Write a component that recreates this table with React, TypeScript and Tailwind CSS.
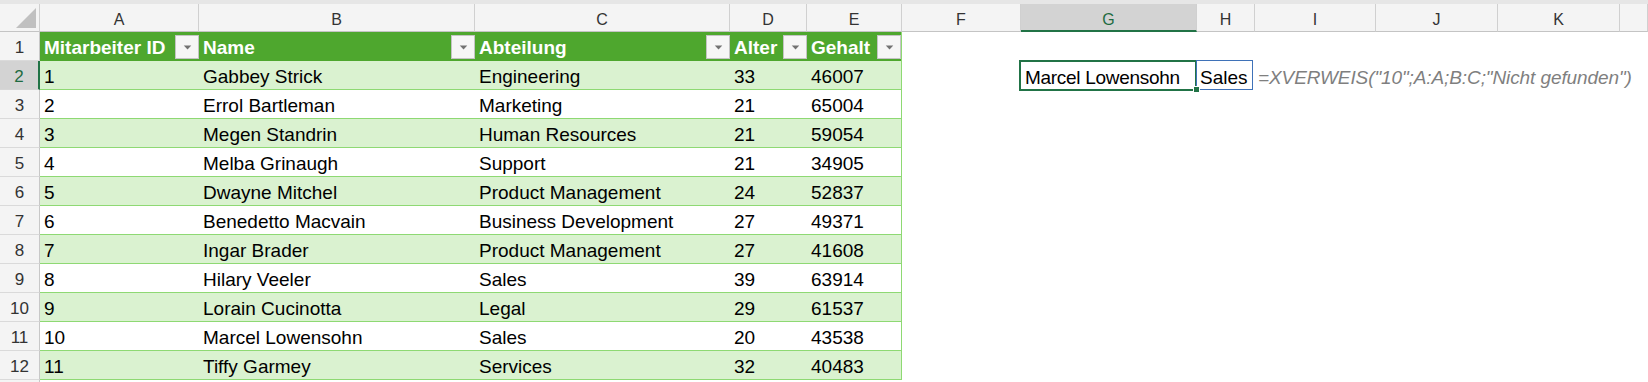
import React from "react";

// employee table rows: id, name, department, age, salary
const rows: [string, string, string, string, string][] = [
  ["1", "Gabbey Strick", "Engineering", "33", "46007"],
  ["2", "Errol Bartleman", "Marketing", "21", "65004"],
  ["3", "Megen Standrin", "Human Resources", "21", "59054"],
  ["4", "Melba Grinaugh", "Support", "21", "34905"],
  ["5", "Dwayne Mitchel", "Product Management", "24", "52837"],
  ["6", "Benedetto Macvain", "Business Development", "27", "49371"],
  ["7", "Ingar Brader", "Product Management", "27", "41608"],
  ["8", "Hilary Veeler", "Sales", "39", "63914"],
  ["9", "Lorain Cucinotta", "Legal", "29", "61537"],
  ["10", "Marcel Lowensohn", "Sales", "20", "43538"],
  ["11", "Tiffy Garmey", "Services", "32", "40483"],
];

const letters = ["A", "B", "C", "D", "E", "F", "G", "H", "I", "J", "K", ""];
const headers = ["Mitarbeiter ID", "Name", "Abteilung", "Alter", "Gehalt"];

const GRID =
  "grid grid-cols-[40px_159px_276px_255px_77px_95px_119px_176px_58px_121px_122px_122px_1fr]";

function FilterButton() {
  return (
    <span className="mb-[2px] flex h-6 w-6 shrink-0 items-center justify-center border border-[#c4c4c4] bg-[#f6f6f6]">
      <svg viewBox="0 0 10 6" className="h-[5px] w-[9px]">
        <path d="M0.5 0.5h9L5 5.5z" fill="#727272" />
      </svg>
    </span>
  );
}

function RowNum({ n, selected }: { n?: number; selected?: boolean }) {
  return (
    <div
      className={
        selected
          ? "flex items-end justify-center border-b border-r-2 border-b-[#d6d6d6] border-r-[#217346] bg-[#d3d3d3] text-[17px] leading-[24px] text-[#1e6b41]"
          : "flex items-end justify-center border-b border-r border-b-[#dadada] border-r-[#c8c8c8] bg-[#f4f4f4] text-[17px] leading-[24px] text-[#333]"
      }
    >
      {n}
    </div>
  );
}

function Empty({ n }: { n: number }) {
  return (
    <>
      {Array.from({ length: n }).map((_, i) => (
        <div key={i} />
      ))}
    </>
  );
}

export default function App() {
  return (
    <div className="h-[382px] w-[1648px] overflow-hidden bg-white font-['Liberation_Sans',Arial,sans-serif] text-black">
      <div className="h-[4px] bg-[#e6e6e6]" />

      {/* column letters */}
      <div className={`${GRID} h-[28px]`}>
        <div className="flex items-end justify-end border-b border-r border-b-[#c4c4c4] border-r-[#d0d0d0] bg-[#f4f4f4] pb-[3px] pr-[3px]">
          <svg viewBox="0 0 20 20" className="h-5 w-5">
            <path d="M20 0V20H0z" fill="#c0c0c0" />
          </svg>
        </div>
        {letters.map((l) =>
          l === "G" ? (
            <div
              key={l}
              className="flex items-end justify-center border-b-2 border-r border-b-[#217346] border-r-[#d0d0d0] bg-[#d3d3d3] text-[16px] leading-[20px] text-[#1e6b41]"
            >
              {l}
            </div>
          ) : (
            <div
              key={l || "L"}
              className="flex items-end justify-center border-b border-r border-b-[#c4c4c4] border-r-[#d0d0d0] bg-[#f4f4f4] pb-[1px] text-[16px] leading-[20px] text-[#333]"
            >
              {l}
            </div>
          )
        )}
      </div>

      {/* table header row */}
      <div className={`${GRID} h-[29px]`}>
        <RowNum n={1} />
        {headers.map((h, i) => (
          <div
            key={h}
            className={`flex items-end justify-between bg-[#4ea72e] pl-1 text-[19px] font-bold text-white ${i === 4 ? "border-r border-r-[#8ed973]" : ""}`}
          >
            <span className="mb-[1px] whitespace-nowrap leading-[24px]">{h}</span>
            <FilterButton />
          </div>
        ))}
        <Empty n={7} />
      </div>

      {rows.map((r, idx) => {
        const rowNo = idx + 2;
        const bg = idx % 2 === 0 ? "bg-[#daf2d0]" : "bg-white";
        return (
          <div key={r[0]} className={`${GRID} h-[29px]`}>
            <RowNum n={rowNo} selected={rowNo === 2} />
            {r.map((v, ci) => (
              <div
                key={ci}
                className={`flex items-end whitespace-nowrap border-b border-b-[#8ed973] ${bg} pl-1 text-[19px] leading-[24px] ${ci === 4 ? "border-r border-r-[#8ed973]" : ""}`}
              >
                {v}
              </div>
            ))}
            {rowNo === 2 ? (
              <>
                <div />
                <div className="relative flex items-end whitespace-nowrap pl-1 text-[19px] leading-[24px] tracking-[-0.3px]">
                  Marcel Lowensohn
                  <div className="absolute -bottom-[1px] -left-[2px] -top-[1px] right-0 border-2 border-[#217346]" />
                  <div className="absolute -bottom-[3px] -right-[3px] z-10 h-[7px] w-[7px] border border-white bg-[#217346]" />
                </div>
                <div className="relative flex items-end whitespace-nowrap pl-[3px] text-[19px] leading-[24px]">
                  Sales
                  <div className="absolute -left-[1px] -top-[1px] bottom-0 right-[2px] border border-[#3f72b8]" />
                </div>
                <div className="flex items-end overflow-visible whitespace-nowrap pl-[3px] text-[19px] italic leading-[24px] tracking-[-0.1px] text-[#7f7f7f]">
                  =XVERWEIS("10";A:A;B:C;"Nicht gefunden")
                </div>
                <Empty n={3} />
              </>
            ) : (
              <Empty n={7} />
            )}
          </div>
        );
      })}

      {/* row 13, only a sliver is in view */}
      <div className={`${GRID} h-[29px]`}>
        <RowNum />
        <Empty n={12} />
      </div>
    </div>
  );
}
